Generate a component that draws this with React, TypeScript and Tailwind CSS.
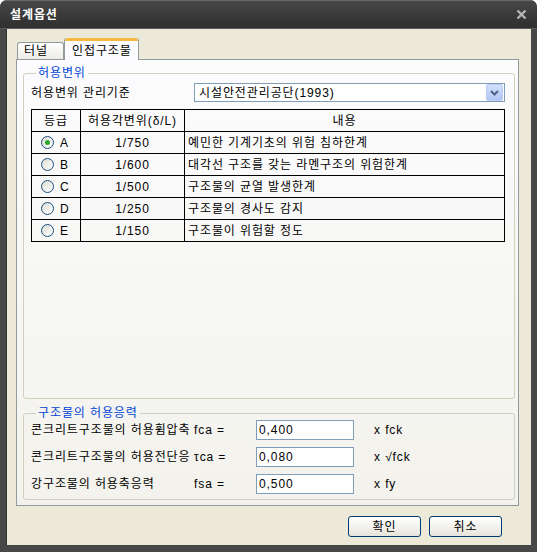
import React from 'react';

type Row = { grade: string; ratio: string; desc: string };

const rows: Row[] = [
  { grade: 'A', ratio: '1/750', desc: '예민한 기계기초의 위험 침하한계' },
  { grade: 'B', ratio: '1/600', desc: '대각선 구조를 갖는 라멘구조의 위험한계' },
  { grade: 'C', ratio: '1/500', desc: '구조물의 균열 발생한계' },
  { grade: 'D', ratio: '1/250', desc: '구조물의 경사도 감지' },
  { grade: 'E', ratio: '1/150', desc: '구조물이 위험할 정도' },
];

const stresses = [
  { label: '콘크리트구조물의 허용휨압축', sym: 'fca =', value: '0,400', unit: 'x fck' },
  { label: '콘크리트구조물의 허용전단응', sym: 'τca =', value: '0,080', unit: 'x √fck' },
  { label: '강구조물의 허용축응력', sym: 'fsa =', value: '0,500', unit: 'x fy' },
];

function Radio({ checked }: { checked?: boolean }) {
  return (
    <span className="flex h-[13px] w-[13px] items-center justify-center rounded-full border border-[#1C5180] bg-linear-to-br from-[#DCDCD4] to-white">
      {checked && <span className="h-[5px] w-[5px] rounded-full bg-[#2DA82D]" />}
    </span>
  );
}

function XpButton({ children }: { children: React.ReactNode }) {
  return (
    <button className="flex h-[21px] w-[73px] items-center justify-center rounded-[3px] border border-[#003C74] bg-linear-to-b from-white to-[#E6E4DA] text-[12px] leading-none text-black">
      {children}
    </button>
  );
}

export default function App() {
  const [grade, setGrade] = React.useState('A');

  return (
    <div className="h-[552px] w-[537px] bg-white text-[12px] tracking-[0.9px] text-black [font-family:'Liberation_Sans','Noto_Sans_CJK_KR',sans-serif]">
      <div className="flex h-full flex-col overflow-hidden rounded-t-[7px] bg-[#474747]">
        {/* title bar */}
        <div className="flex h-[28px] items-center justify-between border-t border-[#6a6a6a] bg-linear-to-b from-[#474747] to-[#2f2f2f] px-[10px]">
          <span className="text-[12px] font-bold leading-none text-white">설계옵션</span>
          <svg width="11" height="11" viewBox="0 0 11 11">
            <path d="M1.5 1.5 L9.5 9.5 M9.5 1.5 L1.5 9.5" stroke="#B4B4B4" strokeWidth="2.4" />
          </svg>
        </div>
        <div className="h-[1px] bg-[#5c5c5c]" />

        {/* body */}
        <div className="mx-[6px] mb-[7px] flex flex-1 flex-col border-l border-[#333] bg-[#ECE9D8] pt-[9px]">
          {/* tabs */}
          <div className="relative z-10 ml-[10px] flex h-[21px] items-end">
            <div className="flex h-[17px] w-[47px] items-center rounded-t-[3px] border border-b-0 border-[#919B9C] bg-linear-to-b from-white to-[#ECEBE6] pl-[6px] leading-none">
              터널
            </div>
            <div className="-mb-[1px] flex h-[22px] w-[75px] flex-col rounded-t-[3px] border-x border-[#919B9C] bg-[#FCFCFE]">
              <div className="h-[3px] rounded-t-[3px] bg-[#F5B93F]" />
              <div className="flex flex-1 items-center pl-[7px] leading-none">인접구조물</div>
            </div>
          </div>

          {/* panel */}
          <div className="ml-[9px] flex h-[447px] w-[503px] flex-col border border-[#919B9C] bg-linear-to-b from-[#FCFCFE] to-[#F3F2EC] pl-[6px] pr-[3px] pt-[6px]">
            <fieldset className="h-[333px] rounded-[3px] border border-[#D0D0BF] pl-[7px] pr-[9px]">
              <legend className="ml-[5px] px-[2px] leading-[14px] text-[#0046D5]">허용변위</legend>
              <div className="mt-[3px] flex h-[19px] items-center">
                <span className="w-[163px] leading-none">허용변위 관리기준</span>
                <div className="flex h-[19px] flex-1 items-center justify-between border border-[#7F9DB9] bg-white pl-[4px] pr-[1px]">
                  <span className="leading-none">시설안전관리공단(1993)</span>
                  <span className="flex h-[17px] w-[17px] items-center justify-center rounded-[2px] border border-[#B9CBF3] bg-linear-to-b from-[#D2E0FD] to-[#B1C6F5]">
                    <svg width="9" height="6" viewBox="0 0 9 6">
                      <path d="M1 1 L4.5 4.5 L8 1" fill="none" stroke="#4D6185" strokeWidth="2" />
                    </svg>
                  </span>
                </div>
              </div>

              <table className="mt-[7px] w-[474px] border-collapse">
                <thead>
                  <tr className="h-[22px]">
                    <th className="w-[49px] border border-black font-normal">등급</th>
                    <th className="w-[104px] border border-black font-normal">허용각변위(δ/L)</th>
                    <th className="border border-black font-normal">내용</th>
                  </tr>
                </thead>
                <tbody>
                  {rows.map((r) => (
                    <tr key={r.grade} className="h-[22px]" onClick={() => setGrade(r.grade)}>
                      <td className="border border-black p-0">
                        <div className="flex items-center gap-[6px] pl-[9px]">
                          <Radio checked={grade === r.grade} />
                          <span className="leading-none">{r.grade}</span>
                        </div>
                      </td>
                      <td className="border border-black p-0 text-center">{r.ratio}</td>
                      <td className="border border-black p-0 pl-[3px]">{r.desc}</td>
                    </tr>
                  ))}
                </tbody>
              </table>
            </fieldset>

            <fieldset className="mt-[7px] h-[94px] rounded-[3px] border border-[#D0D0BF] pl-[7px]">
              <legend className="ml-[5px] px-[2px] leading-[14px] text-[#0046D5]">구조물의 허용응력</legend>
              <div className="grid grid-cols-[163px_62px_98px_auto] items-center gap-y-[7px]">
                {stresses.map((s) => (
                  <React.Fragment key={s.sym}>
                    <span className="whitespace-nowrap leading-none">{s.label}</span>
                    <span className="leading-none">{s.sym}</span>
                    <input
                      defaultValue={s.value}
                      className="h-[20px] w-[98px] border border-[#7F9DB9] bg-white px-[2px] text-[12px] outline-none"
                    />
                    <span className="ml-[20px] leading-none">{s.unit}</span>
                  </React.Fragment>
                ))}
              </div>
            </fieldset>
          </div>

          {/* buttons */}
          <div className="mr-[29px] mt-[10px] flex justify-end gap-[8px]">
            <XpButton>확인</XpButton>
            <XpButton>취소</XpButton>
          </div>
        </div>
      </div>
    </div>
  );
}
